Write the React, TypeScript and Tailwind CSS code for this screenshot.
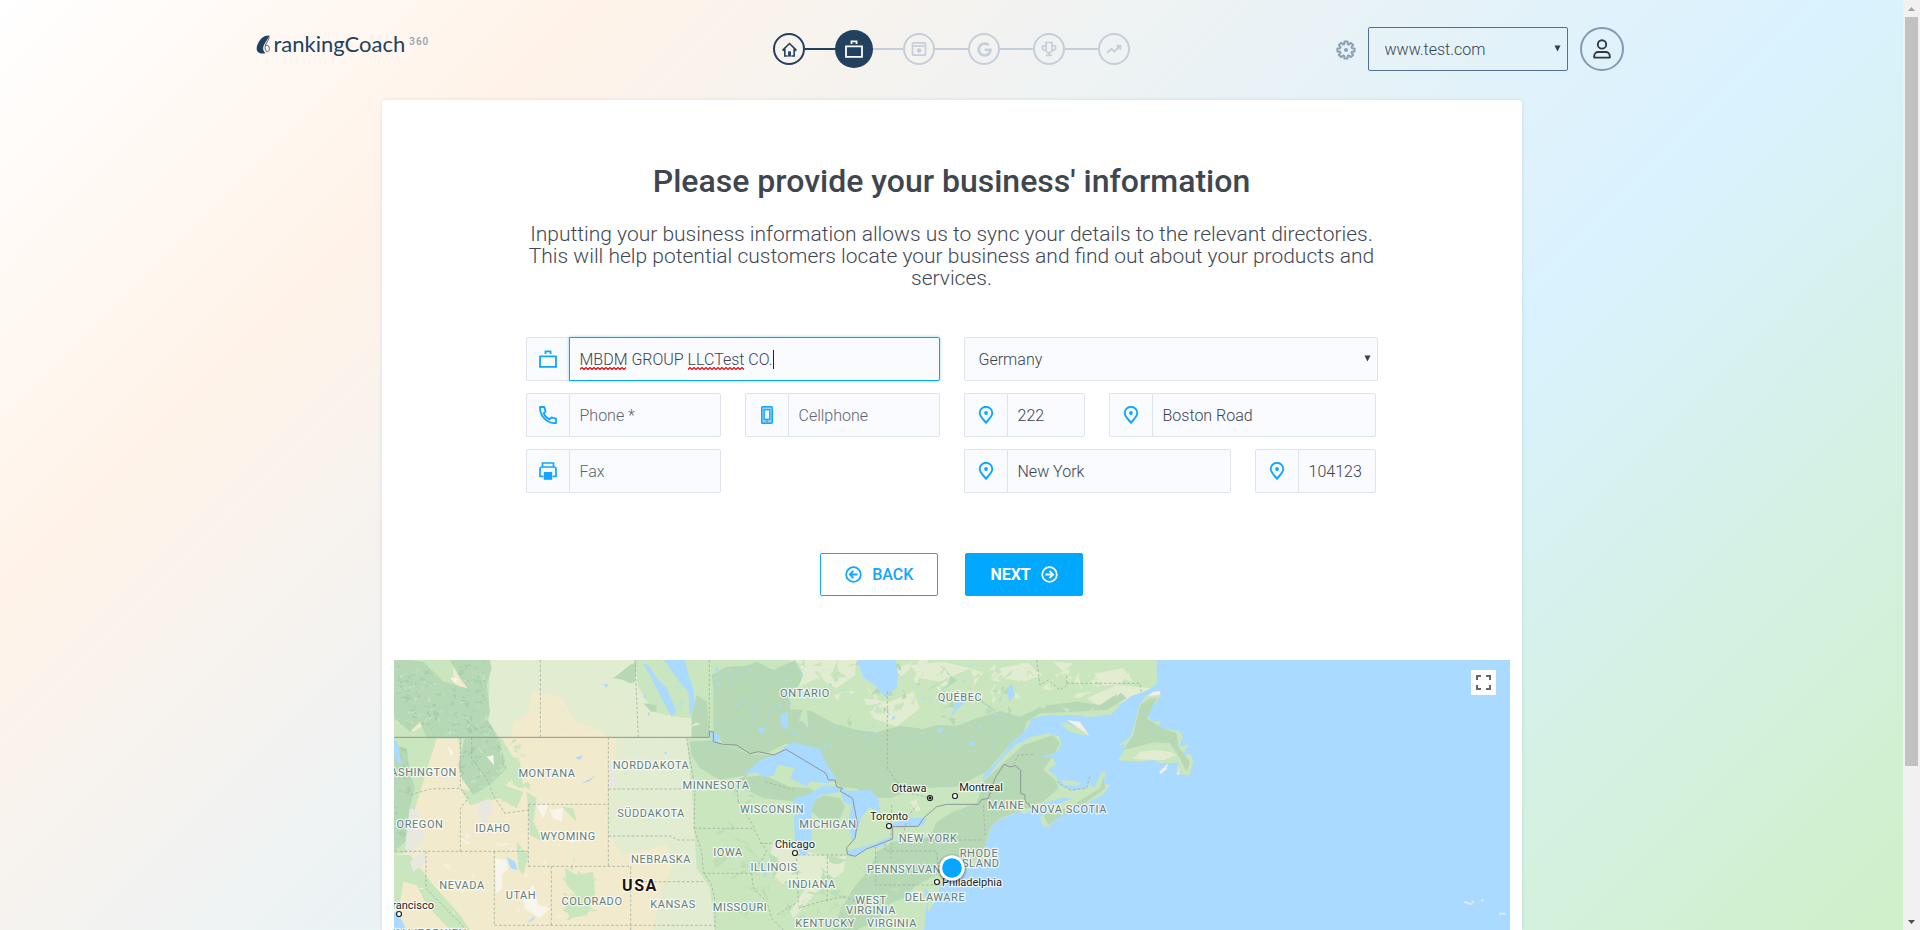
import React from 'react';
import { FaGoogle } from 'react-icons/fa';

const SANS = "font-['Roboto','Liberation_Sans',sans-serif]";

/* ---------- icons ---------- */

function HomeIcon() {
  return (
    <svg width="15" height="15" viewBox="0 0 16 16" fill="none" stroke="currentColor" strokeWidth="1.700" aria-hidden="true">
      <path d="M.800 8.600 8 1.600l7.200 7M3 7v8h3M13 7v8h-3" />
      <path d="M8 10v5.600" strokeWidth="3" />
      <path d="M1.300 7.800v2M14.700 7.800v2" strokeWidth="1.200" />
    </svg>
  );
}

function BriefcaseIcon() {
  return (
    <svg width="18" height="18" viewBox="0 0 18 18" fill="none" stroke="currentColor" strokeWidth="1.800" aria-hidden="true">
      <path d="M1 6.300h16v10.500H1zM6.500 4V1.400h5V4" />
    </svg>
  );
}

function CalendarIcon() {
  return (
    <svg width="16" height="16" viewBox="0 0 16 16" fill="none" stroke="currentColor" strokeWidth="1.700" aria-hidden="true">
      <rect x="1.500" y="1.800" width="13" height="12.400" rx="1" />
      <path d="M1.500 5h13" />
      <circle cx="8" cy="9.500" r="2.300" fill="currentColor" stroke="none" />
    </svg>
  );
}

function TrophyIcon() {
  return (
    <svg width="16" height="16" viewBox="0 0 16 16" fill="none" stroke="currentColor" strokeWidth="1.700" aria-hidden="true">
      <path d="M5 1.500h6v8.500L9.500 11.500h-3L5 10z" />
      <path d="M5 5H1.500v3L3 9.200h2M11 5h3.500v3L13 9.200h-2M8 11.500V14M5 14.300h6" />
    </svg>
  );
}

function TrendIcon() {
  return (
    <svg width="16" height="16" viewBox="0 0 16 16" fill="none" stroke="currentColor" strokeWidth="1.900" aria-hidden="true">
      <path d="M1 12 5.500 7.800l3 2.700L14 5" />
      <path d="M10.300 4.800H14.300V8.800" />
    </svg>
  );
}

function GearIcon() {
  const pts: string[] = [];
  for (let i = 0; i < 8; i++) {
    const a = (i * Math.PI) / 4;
    const at = (r: number, d: number) => `${(10 + r * Math.cos(a + d)).toFixed(2)} ${(10 + r * Math.sin(a + d)).toFixed(2)}`;
    pts.push(at(6.2, -0.29), at(8.7, -0.18), at(8.7, 0.18), at(6.2, 0.29));
  }
  return (
    <svg width="20" height="20" viewBox="0 0 20 20" fill="none" stroke="currentColor" strokeWidth="2" strokeLinejoin="round" aria-hidden="true">
      <path d={`M${pts.join('L')}Z`} />
      <circle cx="10" cy="10" r="2" fill="currentColor" stroke="none" />
    </svg>
  );
}

function UserIcon() {
  return (
    <svg width="20" height="20" viewBox="0 0 20 20" fill="none" stroke="currentColor" strokeWidth="1.900" aria-hidden="true">
      <circle cx="10" cy="5.400" r="4.200" />
      <path d="M2.200 18.600v-1.400c0-2.400 1.800-4.200 4.200-4.200h7.200c2.400 0 4.200 1.800 4.200 4.200v1.400z" strokeLinejoin="round" />
    </svg>
  );
}

function PhoneIcon() {
  return (
    <svg width="18" height="18" viewBox="0 0 18 18" fill="none" stroke="currentColor" strokeWidth="1.800" strokeLinejoin="round" aria-hidden="true">
      <path d="M1 1h4.300l1.300 4.600-2 1.700c1 2.600 3.200 4.900 6.100 6.100l1.800-2L17 12.700V17C8.200 17.600.500 9.800 1 1z" />
    </svg>
  );
}

function CellIcon() {
  return (
    <svg width="12" height="18" viewBox="0 0 12 18" fill="none" stroke="currentColor" aria-hidden="true">
      <rect x=".700" y=".700" width="10.600" height="16.600" rx="1" strokeWidth="1.400" fill="#9cd0fb" />
      <rect x="3.200" y="3.700" width="5.600" height="9.600" strokeWidth="1.300" fill="#fafbfe" />
      <path d="M5 15.200h2" strokeWidth="1.200" />
    </svg>
  );
}

function PrinterIcon() {
  return (
    <svg width="18" height="18" viewBox="0 0 18 18" fill="none" stroke="currentColor" strokeWidth="1.700" aria-hidden="true">
      <path d="M3.500 4.500V1h11v3.500M4.500 14.300H1V7.200q0-2.200 2.200-2.200h11.600q2.200 0 2.200 2.200v7.100h-3.500" />
      <path d="M4.800 10h8.400v7.800H4.800z" fill="currentColor" stroke="none" />
    </svg>
  );
}

function PinIcon() {
  return (
    <svg width="16" height="18" viewBox="0 0 16 18" fill="none" stroke="currentColor" strokeWidth="1.900" aria-hidden="true">
      <path d="M8 16.800C6 14 1.700 10.600 1.700 7.100a6.300 6.300 0 0 1 12.600 0C14.300 10.600 10 14 8 16.800z" />
      <circle cx="8" cy="7" r="1.900" fill="currentColor" stroke="none" />
    </svg>
  );
}

function ArrowCircle({ dir }: { dir: 'left' | 'right' }) {
  return (
    <svg width="17" height="17" viewBox="0 0 17 17" fill="none" stroke="currentColor" strokeWidth="1.800" aria-hidden="true">
      <circle cx="8.500" cy="8.500" r="7.300" />
      {dir === 'left' ? <path d="M12.600 8.500H5M8.500 4.800 4.800 8.500l3.700 3.700" /> : <path d="M4.400 8.500H12M8.500 4.800l3.700 3.700-3.700 3.700" />}
    </svg>
  );
}

function Triangle({ className }: { className: string }) {
  return (
    <svg width="7" height="7" viewBox="0 0 7 7" className={className} aria-hidden="true">
      <path d="M.500.500h6L3.500 6.500z" fill="#3a3f46" />
    </svg>
  );
}

/* ---------- header ---------- */

function Logo() {
  return (
    <a href="#" className="flex items-start self-start text-[#21415f]">
      <svg width="15" height="19" viewBox="0 0 15 19" aria-hidden="true" className="mt-2">
        <path d="M13.500.600C8 .200 4.500 3.500 2 8.500c-2 4-2 8.500 2 9.700 2 .500 4 .400 5.600-.300C6.800 16 6.600 13 8 10 9.400 7.200 12 4 13.500.600z" fill="currentColor" />
        <path d="M13.200 1.500c.300 3-2.700 5.500-3.700 8.500-.900 2.800-.300 6 1.500 6.600 2 .500 2.900-2.600 2-4.800-.400-1.300-1.700-1.800-3.300-1.400" fill="none" stroke="currentColor" strokeWidth=".800" />
      </svg>
      <span className="ml-[3px] pt-1 font-['Lato','Liberation_Sans',sans-serif] text-[22px] leading-[26px]">rankingCoach</span>
      <span className="ml-1 pt-2 text-[10px] leading-[14px] font-medium tracking-widest text-[#93a0b3]">360</span>
    </a>
  );
}

const steps = [
  { label: 'Home', icon: <HomeIcon />, state: 'done' },
  { label: 'Business', icon: <BriefcaseIcon />, state: 'active' },
  { label: 'Website', icon: <CalendarIcon />, state: 'todo' },
  { label: 'Google', icon: <FaGoogle size={15} />, state: 'todo' },
  { label: 'Competitors', icon: <TrophyIcon />, state: 'todo' },
  { label: 'Progress', icon: <TrendIcon />, state: 'todo' },
];

const stepStyle: Record<string, string> = {
  done: 'size-8 border-2 border-[#21415f] text-[#21415f]',
  active: '-mx-[3px] size-[38px] bg-[#21415f] text-white',
  todo: 'size-8 border-2 border-[#c5cfdb] text-[#c5cfdb]',
};

function Steps() {
  return (
    <nav aria-label="Setup steps" className="flex items-center">
      {steps.map((s, i) => (
        <React.Fragment key={s.label}>
          {i > 0 && <span className={`h-0.5 w-[33px] ${i === 1 ? 'bg-[#21415f]' : 'bg-[#c5cfdb]'}`} />}
          <a href="#" aria-label={s.label} className={`relative flex items-center justify-center rounded-full ${stepStyle[s.state]}`}>
            {s.icon}
          </a>
        </React.Fragment>
      ))}
    </nav>
  );
}

function Header() {
  return (
    <header className="mx-auto grid w-full max-w-[1392px] grid-cols-[1fr_auto_1fr] items-center pt-[27px]">
      <Logo />
      <Steps />
      <div className="flex items-center justify-end pr-6">
        <button type="button" aria-label="Settings" className="mt-0.5 mr-3 text-[#8ba0b8]">
          <GearIcon />
        </button>
        <div className="relative mr-3">
          <select aria-label="Website" className="h-11 w-[200px] appearance-none rounded-[2px] border border-[#4f7193] pt-0.5 pl-4 text-base font-light text-[#3a4250]">
            <option>www.test.com</option>
          </select>
          <Triangle className="pointer-events-none absolute top-[18px] right-[7px]" />
        </div>
        <button type="button" aria-label="Account" className="flex size-11 items-center justify-center rounded-full border-2 border-[#8499b3] text-[#33383f]">
          <UserIcon />
        </button>
      </div>
    </header>
  );
}

/* ---------- form ---------- */

interface FieldProps {
  label: string;
  icon: React.ReactNode;
  value?: string;
  placeholder?: string;
  focused?: boolean;
  className?: string;
  children?: React.ReactNode;
}

function Field({ label, icon, value, placeholder, focused, className = '', children }: FieldProps) {
  return (
    <label className={`flex h-11 min-w-0 ${className}`}>
      <span className="flex w-[43px] shrink-0 items-center justify-center rounded-l-[2px] border border-r-0 border-[#dfe4ec] bg-[#fafbfe] text-[#0ea6ff]">
        {icon}
      </span>
      <span className="relative flex min-w-0 flex-1">
        <input
          aria-label={label}
          defaultValue={value}
          placeholder={placeholder}
          spellCheck={false}
          className={`w-full min-w-0 rounded-r-[2px] border bg-[#fafbfe] pt-0.5 pl-2.5 text-base font-light text-[#3a4250] outline-none placeholder:text-[#5b6472] ${
            focused ? 'border-[#0aa4f8] shadow-[0_0_3px_#0aa4f880]' : 'border-[#dfe4ec]'
          }`}
        />
        {children}
      </span>
    </label>
  );
}

function Squiggle({ className, width }: { className: string; width: number }) {
  let d = 'M0 2.5';
  for (let x = 2; x <= width; x += 2) d += `L${x} ${x % 4 === 2 ? 0.5 : 2.5}`;
  return (
    <svg width={width} height="3" viewBox={`0 0 ${width} 3`} className={`pointer-events-none absolute ${className}`} aria-hidden="true">
      <path d={d} fill="none" stroke="#f01010" strokeWidth="1.300" />
    </svg>
  );
}

function BusinessForm() {
  return (
    <form className="mx-auto mt-12 w-full max-w-[852px]" onSubmit={(e) => e.preventDefault()}>
      <div className="grid grid-cols-2 gap-x-6">
        <div className="grid grid-cols-2 gap-x-6 gap-y-3">
          <Field label="Company name" icon={<BriefcaseIcon />} value="MBDM GROUP LLCTest CO." focused className="col-span-2">
            <Squiggle className="top-[30px] left-[11px]" width={47} />
            <Squiggle className="top-[30px] left-[119px]" width={56} />
            <span className="absolute top-[13px] left-[204px] h-[19px] w-px bg-[#22262c]" />
          </Field>
          <Field label="Phone" icon={<PhoneIcon />} placeholder="Phone *" />
          <Field label="Cellphone" icon={<CellIcon />} placeholder="Cellphone" />
          <Field label="Fax" icon={<PrinterIcon />} placeholder="Fax" />
        </div>
        <div className="flex flex-col gap-3">
          <div className="relative">
            <select aria-label="Country" className="h-11 w-full appearance-none rounded-[2px] border border-[#dfe4ec] bg-[#fafbfe] pt-0.5 pl-[14px] text-base font-light text-[#3a4250]">
              <option>Germany</option>
            </select>
            <Triangle className="pointer-events-none absolute top-[18px] right-[7px]" />
          </div>
          <div className="grid grid-cols-[121fr_267fr] gap-6 pr-0.5">
            <Field label="House number" icon={<PinIcon />} value="222" />
            <Field label="Street" icon={<PinIcon />} value="Boston Road" />
          </div>
          <div className="grid grid-cols-[267fr_121fr] gap-6 pr-0.5">
            <Field label="City" icon={<PinIcon />} value="New York" />
            <Field label="Postal code" icon={<PinIcon />} value="104123" />
          </div>
        </div>
      </div>
      <div className="mt-[60px] flex justify-center gap-[27px]">
        <button type="button" className="flex h-[43px] items-center gap-2.5 rounded-[2px] border border-[#14a5ff] px-6 text-base font-medium text-[#14a5ff]">
          <ArrowCircle dir="left" />
          BACK
        </button>
        <button type="submit" className="flex h-[43px] items-center gap-2.5 rounded-[2px] border border-[#00a8ff] bg-[#00a8ff] px-6 text-base font-bold text-white">
          NEXT
          <ArrowCircle dir="right" />
        </button>
      </div>
    </form>
  );
}

/* ---------- map ---------- */

const WATER = '#aadaff';
const LEAF = '#c9e6be';
const FOREST = '#b6d8b5';
const PALE = '#e2ecd0';
const SAND = '#f1eacc';
const SNOW = '#f8f6ec';

/* Terrain shapes are in map units, three to a pixel. */
const LAND =
  'M12 15H2300V60L2304 82L2285 98L2258 112L2225 122L2195 145L2165 178L2100 187L2050 179L1960 182L1925 192L1908 225L1885 245L1865 262L1845 290L1815 325L1782 358L1777 378L1795 362L1822 328L1850 296L1880 268L1925 245L1975 235L2008 243L2014 268L2000 290L1978 300L1950 305L1990 310L1998 328L1975 345L1998 362L2010 392L2050 408L2085 400L2098 388L2112 398L2135 352L2146 350L2142 385L2160 392L2140 418L2090 445L2040 468L2000 490L1975 516L1958 514L1950 490L1972 462L2005 448L2045 430L2020 428L1975 440L1930 462L1905 478L1885 470L1865 480L1835 490L1805 512L1795 545L1785 575L1800 595L1798 612L1770 622L1740 638L1690 655L1655 668L1650 700L1640 735L1618 765L1605 795L1612 825H12Z';

const NEWFOUNDLAND =
  'M2268 122L2310 108L2312 122L2290 150L2272 182L2290 200L2312 198L2300 222L2335 222L2372 230L2378 245L2368 275L2396 268L2378 300L2400 296L2410 318L2398 362L2378 358L2358 355L2366 320L2345 325L2310 325L2290 315L2250 320L2183 316L2200 290L2205 268L2185 272L2222 245L2235 200L2248 150Z';

const ROCKIES = [
  'M12 15H60L100 20L160 80L230 100L270 130L290 190L330 260L350 340L310 380L250 420L215 370L205 330L225 250L110 250L90 200L60 230L12 190ZM12 270L50 280L60 350L75 400L60 450L45 560L12 590Z',
  'M180 15H300L305 40L290 90L300 170L285 215L255 130L210 70Z',
];

const FORESTS = [
  'M970 100L965 60L1010 35L1070 32L1100 20L1150 45L1215 15L1240 60L1225 95L1200 110V162L1265 168L1330 205L1400 225L1460 232L1530 212L1600 222L1640 210L1700 212L1760 190L1830 168L1890 185L1960 152L2060 140L2130 150L2190 110L2210 130L2150 165L2050 170L1950 175L1910 200L1900 240L1850 280L1790 350L1740 380L1700 400L1620 410L1540 415L1500 430L1420 425L1400 400L1350 395L1330 375L1300 345L1220 290L1190 265L1130 295L1080 295L1000 265L970 230Z',
  'M905 180L920 120L950 140L960 245L905 245ZM900 260L970 255L1080 298L1150 300L1070 360L990 375L930 340L905 300Z',
  'M1050 370L1120 360L1200 395L1260 400L1290 420L1230 440L1120 430L1060 400Z',
  'M1780 380L1850 315L1900 270L1990 240L2010 265L1990 300L1960 345L1995 375L2005 400L1960 440L1890 468L1830 490L1800 520L1785 575L1780 600L1740 620L1690 650L1640 660L1580 690L1540 730L1500 745L1470 790L1400 825H1330L1350 770L1390 700L1440 640L1460 590L1510 560L1620 545L1640 500L1690 470L1760 445Z',
  'M1270 440L1300 420L1350 430L1365 455L1350 490L1290 490L1265 470Z',
  'M670 70L720 30L740 20L735 80L720 85L700 75ZM760 145L800 150L800 170L785 172Z',
  'M1960 480L2040 455L2130 400L2140 365L2146 400L2090 440L2010 485L1975 510Z',
];

const NEWFOUNDLAND_FOREST =
  'M2250 150L2280 130L2300 130L2270 190L2310 215L2360 235L2365 275L2400 320L2390 350L2370 310L2340 265L2290 262L2225 280L2200 285L2230 240Z';
const NEWFOUNDLAND_PALE = 'M2250 290L2290 285L2340 290L2360 300L2320 316L2230 312Z';

const PALES = [
  'M300 15H735L745 95L790 170L850 185L905 190V250H330L295 200Z',
  'M655 250H890L905 400L915 520L925 640L975 700V825H700L655 540Z',
  'M1200 15H1400L1395 60L1340 100L1280 70L1200 110ZM1420 130L1500 140L1570 110L1590 160L1520 215L1450 190Z',
  'M1560 30L1660 20L1740 40L1650 80L1590 70ZM1150 560L1290 600L1360 620L1300 680L1180 690L1130 640Z',
  'M1300 620L1370 600L1360 650L1290 700L1210 790L1200 770ZM960 550L1020 520L1010 600L940 650Z',
  'M1830 40L1900 25L1960 60L1900 80L1840 70ZM2090 130L2180 90L2290 100L2200 140L2140 160ZM1990 20L2050 25L2020 50Z',
  'M1560 440L1680 400L1660 430L1580 470ZM2090 60L2200 40L2230 80L2120 95Z',
];

const SANDS = [
  'M360 250L370 200L410 180L430 110L510 125L560 200L640 230L655 250V540L700 600L830 570L850 630L820 690L790 825H12V600L60 590L75 460L140 250H205L215 330L250 420L340 400L390 340L335 250Z',
  'M12 130L40 160L100 155L105 210L70 230L20 200ZM190 30L230 70L255 130L235 120L190 80ZM640 250H680L665 440Z',
];

const GREENS = [
  'M40 70L110 40L140 130L100 150L60 120ZM210 400L250 410L340 390L400 410L380 460L330 430L240 450ZM345 300L390 320L400 400L370 390Z',
  'M410 410L440 430L430 500L460 560L420 540ZM525 640L560 660L610 650L615 720L590 780L540 790L520 740L560 720L530 690Z',
  'M12 600L60 600L130 690L210 780L240 825H180L110 750L80 690L40 680L30 740L12 740ZM380 560L415 600L400 660L385 640ZM515 455L550 460L560 500Z',
  'M735 15L895 15L905 130L900 190L860 170L800 120L745 95L740 60Z',
  'M905 400H1100L1130 600L1120 825H975L960 700L920 640Z',
];

const WATERS = [
  'M760 25L775 30L800 70L830 100L860 170L845 185L820 140L790 80ZM820 15H885L895 60L910 100L915 150L900 180L895 110L860 70L840 40Z',
  'M1060 360L1110 315L1160 298L1185 275L1210 262L1290 282L1300 310L1340 375L1310 385L1260 380L1250 395L1200 368L1215 340L1165 330L1150 362L1120 365L1100 352Z',
  'M1250 420L1300 392L1370 398L1345 412L1290 420L1268 450L1262 500L1265 560L1250 600L1232 600L1215 560L1212 490L1225 450L1205 470L1212 430Z',
  'M1350 400L1375 408L1440 405L1465 430L1470 475L1440 455L1412 490L1400 540L1388 560L1375 500L1385 450L1360 440Z',
  'M1370 588L1400 580L1450 568L1500 545L1508 552L1470 575L1430 582L1405 600L1380 604Z',
  'M1495 510L1550 488L1610 490L1600 510L1530 520Z',
  'M1400 15H1515L1525 60L1520 100L1500 110L1490 128L1470 110L1455 90L1420 70Z',
  'M960 230L990 240L980 270L962 250ZM1170 180L1195 170L1192 225L1175 215ZM1100 215L1125 220L1115 240Z',
  'M1700 130L1725 140L1690 175L1680 200ZM1850 105L1865 85L1875 120L1858 140ZM1735 260L1758 262L1745 275ZM1640 225L1665 215L1650 235Z',
  'M350 605L375 620L382 645L362 640ZM410 805L435 782L430 795ZM555 308L578 300L570 315ZM575 385L620 360L595 380ZM640 88H655L650 98ZM12 250L25 270L35 330L20 320L12 290ZM12 770L30 785L50 825H12Z',
  'M1120 660L1130 640L1128 670ZM765 600L780 605L772 612ZM820 292H830V300ZM1600 700L1625 715L1610 745L1602 825H1618L1612 740Z',
];

const SNOWS = [
  'M315 610L350 615L355 640L335 660L338 700L318 715ZM400 720L430 690L445 750L480 760L450 790L405 760ZM480 465L520 460L515 500L490 490ZM520 530L560 550L545 565Z',
  'M440 450L475 450L460 490ZM170 270L190 290L185 305ZM290 305L310 300L312 330ZM180 68L205 70L195 85Z',
];

const BARREN =
  'M270 440L300 430L305 470L285 510L262 470ZM60 460L90 470L70 510L110 540L60 600L45 580ZM60 620L100 590L110 620L70 650ZM660 320L680 400L655 400Z';

const SHOALS =
  'M2290 110L2312 108L2308 120L2272 122ZM2308 350L2335 325L2328 345L2310 358ZM2070 200L2030 195L2098 242ZM2360 358L2370 340L2365 360Z';

const STATE_LINES =
  'M451 15V247M735 15L745 247M958 15V230M1492 110V340L1520 380L1570 418L1621 428M655 247V634M890 250L905 340L915 410L912 520L935 590L940 650L965 690L975 740V825M655 402H905M655 543H840L865 555L912 555M415 448H655M415 448V634M415 634H722V825M415 589H12M211 247V400M211 590V460L235 430L211 400L120 402L60 420M245 247V310L290 370L310 420L345 475L415 465M108 589V700L230 825M313 589V811M313 811H975M484 634V811M722 680H940M912 520H1090L1130 590L1100 640L1085 655H940M1085 655L1090 700L1130 740L1145 790L1180 825M1045 440L1095 520M1045 440L1040 390L1070 360M1125 380L1210 405M1110 565H1210M1210 600H1370M1220 610L1225 740L1160 780M1312 605V740M1225 760L1290 740L1360 725L1400 740M1457 575V690H1640M1485 565V588H1640L1645 650M1505 450L1503 545V610M1540 540L1550 490L1580 450M1540 555H1780M1780 450L1785 540M1870 330L1885 300L1935 298M1940 15L1950 90L1975 75L2010 105L2030 90V60M2030 85H2250L2255 118M2000 380L2040 405L2090 400L2100 360';

const BORDERS =
  'M12 247H958V230H970V260L1000 268L1040 270L1080 296L1105 290L1152 300L1188 283L1200 290L1308 355L1315 375H1335L1340 395L1357 400L1350 408L1388 430L1402 505L1395 550L1370 578L1372 598L1395 604L1430 582L1508 552V515L1585 514L1600 490L1640 455L1670 448H1765L1775 434L1795 430L1815 370L1842 328L1860 336L1878 332L1892 347V415L1905 420V440L1918 448L1922 460';

/* Small scattered facets that give the terrain its relief. */
function facets(seed: number, count: number, x0: number, y0: number, x1: number, y1: number, size: number) {
  let s = seed;
  const rnd = () => {
    s = (s * 16807) % 2147483647;
    return s / 2147483647;
  };
  for (let i = 0; i < 5; i++) rnd();
  let d = '';
  for (let i = 0; i < count; i++) {
    const x = x0 + rnd() * (x1 - x0);
    const y = y0 + rnd() * (y1 - y0);
    d += `M${x.toFixed(0)} ${y.toFixed(0)}`;
    for (let k = 0; k < 4; k++) {
      d += `l${((rnd() - 0.4) * size).toFixed(0)} ${((rnd() - 0.5) * size).toFixed(0)}`;
    }
    d += 'Z';
  }
  return d;
}

const ridges = [
  { d: facets(11, 320, 12, 15, 350, 590, 20), fill: '#a6cdac' },
  { d: facets(23, 180, 12, 15, 350, 590, 18), fill: '#c4e0c2' },
];

const relief = [
  { d: facets(31, 36, 330, 270, 400, 450, 26), fill: LEAF },
  { d: facets(43, 60, 1210, 20, 2240, 170, 56), fill: LEAF },
  { d: facets(47, 30, 1210, 20, 2240, 130, 50), fill: PALE },
  { d: facets(53, 26, 1250, 20, 1900, 210, 46), fill: FOREST },
  { d: facets(61, 30, 980, 400, 1220, 800, 44), fill: '#bddfb6' },
  { d: facets(67, 26, 1200, 600, 1500, 820, 44), fill: '#bddfb6' },
  { d: facets(71, 30, 430, 130, 900, 240, 30), fill: '#e9ebcf' },
  { d: facets(79, 45, 80, 480, 520, 800, 24), fill: '#f6f1dc' },
  { d: facets(83, 26, 520, 650, 600, 790, 26), fill: LEAF },
  { d: facets(97, 60, 970, 30, 1250, 240, 12), fill: WATER },
  { d: facets(101, 80, 1200, 30, 1880, 300, 12), fill: WATER },
  { d: facets(103, 24, 750, 30, 890, 170, 14), fill: WATER },
];

type Label = [string, number, number, ('start' | 'middle' | 'end')?];

const regions: Label[] = [
  ['WASHINGTON', 63, 116, 'end'], ['MONTANA', 153, 117], ['NORDDAKOTA', 257, 109], ['MINNESOTA', 322, 129],
  ['SÜDDAKOTA', 257, 157], ['OREGON', 26, 168], ['IDAHO', 99, 172], ['WYOMING', 174, 180], ['NEBRASKA', 267, 203],
  ['IOWA', 334, 196], ['ILLINOIS', 380, 211], ['NEVADA', 68, 229], ['UTAH', 127, 239], ['COLORADO', 198, 245],
  ['KANSAS', 279, 248], ['MISSOURI', 346, 251], ['WISCONSIN', 378, 153], ['KALIFORNIEN', 73, 277, 'end'],
  ['ONTARIO', 411, 37], ['QUÉBEC', 566, 41], ['MICHIGAN', 434, 168], ['MAINE', 612, 149], ['NOVA SCOTIA', 675, 153],
  ['NEW YORK', 534, 182], ['RHODE', 585, 197], ['ISLAND', 585, 207], ['PENNSYLVANIA', 473, 213, 'start'],
  ['INDIANA', 418, 228], ['DELAWARE', 541, 241], ['WEST', 477, 244], ['VIRGINIA', 477, 254], ['KENTUCKY', 431, 267],
  ['VIRGINIA', 498, 267],
];

const cities: Label[] = [
  ['San Francisco', 40, 249, 'end'], ['Chicago', 401, 188], ['Ottawa', 515, 132], ['Montreal', 587, 131],
  ['Toronto', 495, 160], ['Philadelphia', 548, 226, 'start'],
];

const dots = [[5, 254], [401, 193], [536, 138], [561, 136], [495, 166], [543, 222]];

function MapView() {
  return (
    <div className="relative mx-3 min-h-0 flex-1 overflow-hidden bg-[#aadaff]">
      <svg className="h-full w-full" viewBox="0 0 1116 270" preserveAspectRatio="xMidYMin slice" role="img" aria-label="Map of North America">
        <defs>
          <clipPath id="land">
            <path d={LAND} />
          </clipPath>
          <clipPath id="rockies">
            <path d={ROCKIES.join('')} />
          </clipPath>
        </defs>
        <g transform="translate(-4 -5) scale(.333333)">
          <path d={LAND} fill={LEAF} />
          <g clipPath="url(#land)">
            {PALES.map((d) => <path key={d} d={d} fill={PALE} />)}
            {SANDS.map((d) => <path key={d} d={d} fill={SAND} />)}
            {GREENS.map((d) => <path key={d} d={d} fill={LEAF} />)}
            {FORESTS.map((d) => <path key={d} d={d} fill={FOREST} />)}
            {ROCKIES.map((d) => <path key={d} d={d} fill={FOREST} />)}
            <g clipPath="url(#rockies)">
              {ridges.map((r) => <path key={r.d} d={r.d} fill={r.fill} />)}
            </g>
            {relief.map((r) => <path key={r.d} d={r.d} fill={r.fill} />)}
            {SNOWS.map((d) => <path key={d} d={d} fill={SNOW} />)}
            <path d={BARREN} fill="#e8e8e0" />
            <path d="M1590 400L1700 395L1780 355L1765 385L1700 425L1640 450L1600 480L1580 440Z" fill={LEAF} />
            <path d="M1400 540L1412 495L1440 475L1500 465L1570 480L1510 495L1490 520L1500 545L1440 570L1375 575Z" fill={LEAF} />
          </g>
          <path d={NEWFOUNDLAND} fill={LEAF} />
          <path d={NEWFOUNDLAND_FOREST} fill={FOREST} />
          <path d={NEWFOUNDLAND_PALE} fill={PALE} />
          <path d="M2008 202L2030 205L2070 222L2098 242L2075 240L2035 228ZM2010 375L2050 378L2075 385L2060 392L2025 390Z" fill={LEAF} />
          {WATERS.map((d) => <path key={d} d={d} fill={WATER} />)}
          <path d={SHOALS} fill="#f1efe6" />
          <path d="M3222 742h8l8 5h10M3245 739l8 4M3273 736h8M3327 776h20" fill="none" stroke="#e3eef2" strokeWidth="5" />
          <path d={STATE_LINES} fill="none" stroke="#a5b0a4" strokeWidth="2.500" strokeDasharray="8 6" />
          <path d={BORDERS} fill="none" stroke="#8f979a" strokeWidth="3" />
        </g>
        <g className={SANS} strokeLinejoin="round">
          {regions.map(([t, x, y, a = 'middle']) => (
            <text key={`${t}${x}`} x={x} y={y} textAnchor={a} fill="#647c7c" stroke="#ffffffc0" strokeWidth="2.500" className="text-[11px] tracking-wider [paint-order:stroke]">
              {t}
            </text>
          ))}
          {cities.map(([t, x, y, a = 'middle']) => (
            <text key={t} x={x} y={y} textAnchor={a} fill="#1d1d1d" stroke="#ffffffc0" strokeWidth="2.500" className="text-[11px] [paint-order:stroke]">
              {t}
            </text>
          ))}
          <text x="246" y="231" textAnchor="middle" fill="#161616" stroke="#ffffffc0" strokeWidth="2.500" className="text-base font-bold tracking-widest [paint-order:stroke]">
            USA
          </text>
        </g>
        {dots.map(([x, y]) => <circle key={x} cx={x} cy={y} r="2.500" fill="#fff" stroke="#222" strokeWidth="1.200" />)}
        <circle cx="536" cy="138" r="1.400" fill="#111" />
        <circle cx="558" cy="209" r="15" fill="#00000018" />
        <circle cx="558" cy="209" r="13.800" fill="#00000030" />
        <circle cx="558" cy="208" r="12.700" fill="#fff" />
        <circle cx="558" cy="208" r="9.800" fill="#00a8ff" />
        <circle cx="558" cy="208" r="3" fill="#1c9df0" />
      </svg>
      <button type="button" aria-label="Toggle fullscreen view" className="absolute top-2.5 right-3.5 flex size-[25px] items-center justify-center bg-white text-[#666]">
        <svg width="15" height="15" viewBox="0 0 15 15" fill="none" stroke="currentColor" strokeWidth="2" aria-hidden="true">
          <path d="M1 5V1h4M10 1h4v4M14 10v4h-4M5 14H1v-4" />
        </svg>
      </button>
    </div>
  );
}

function ScrollRail() {
  return (
    <div className="flex w-[17px] shrink-0 flex-col items-center bg-[#f1f1f1]" aria-hidden="true">
      <svg width="17" height="17" viewBox="0 0 17 17"><path d="M5 11h7L8.500 7z" fill="#a3a3a3" /></svg>
      <div className="h-[80.5%] w-[13px] bg-[#c1c1c1]" />
      <svg width="17" height="17" viewBox="0 0 17 17" className="mt-auto"><path d="M5 7h7L8.500 11z" fill="#505050" /></svg>
    </div>
  );
}

export default function App() {
  return (
    <div className={`flex h-screen overflow-hidden ${SANS}`}>
      <div className="flex min-w-0 flex-1 flex-col bg-[linear-gradient(135deg,#ffffff_0%,#fff3e9_21%,#daf2ff_65%,#cff0c8_100%)]">
        <Header />
        <main className="mx-auto mt-[29px] flex min-h-0 w-full max-w-[1140px] flex-1 flex-col rounded-t bg-white pt-[60px] shadow-[0_0_4px_#0000001a]">
          <h1 className="text-center text-[32px] leading-[42px] font-medium text-[#3f4650]">Please provide your business' information</h1>
          <p className="mx-auto mt-[21px] max-w-[852px] text-center text-[21px] leading-[22px] font-light text-[#3f4754]">
            Inputting your business information allows us to sync your details to the relevant directories. This will help potential customers locate your business and find out about your products and services.
          </p>
          <BusinessForm />
          <div className="mt-16 flex min-h-0 flex-1 flex-col">
            <MapView />
          </div>
        </main>
      </div>
      <ScrollRail />
    </div>
  );
}
